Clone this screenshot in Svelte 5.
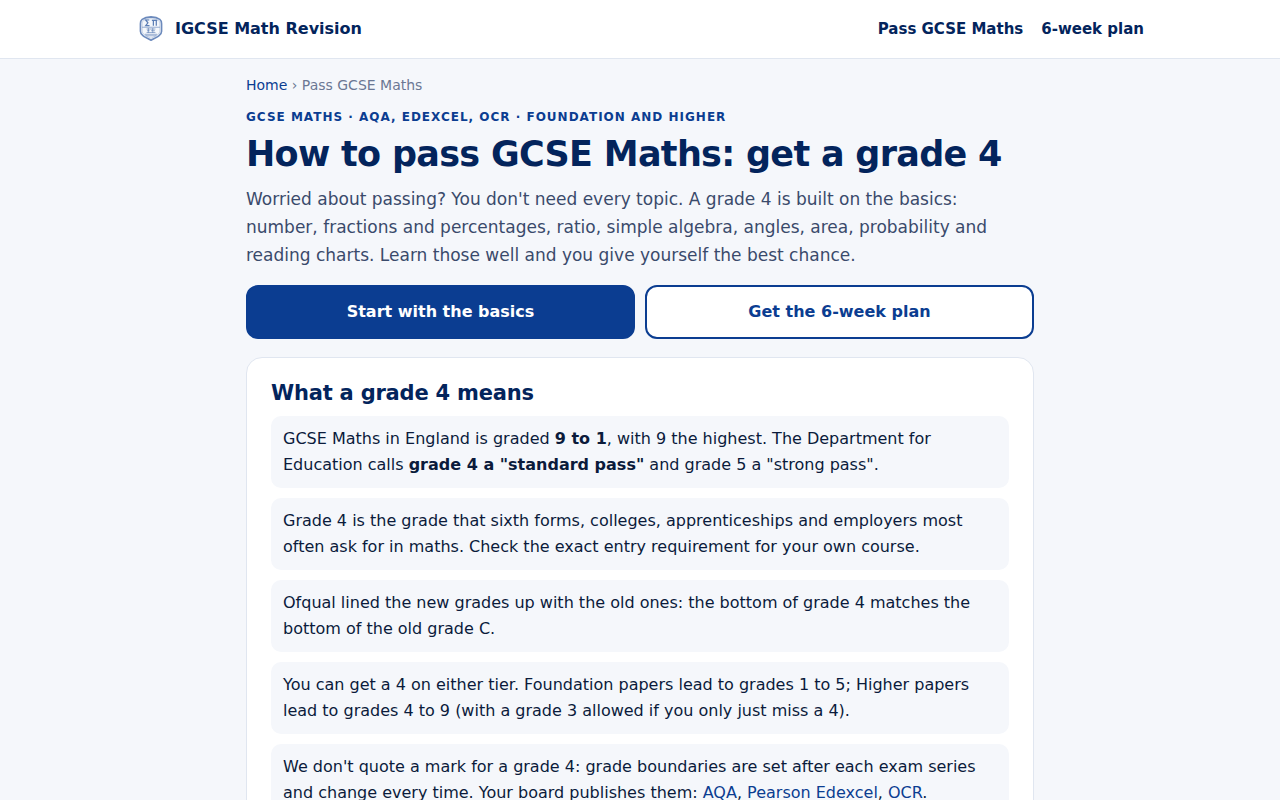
<script lang="ts">
const navLinks = [
    { label: 'Pass GCSE Maths', href: '#pass' },
    { label: '6-week plan', href: '#plan' }
]

const boards = [
    { name: 'AQA', href: '#aqa' },
    { name: 'Pearson Edexcel', href: '#edexcel' },
    { name: 'OCR', href: '#ocr' }
]
</script>

<header class="site-header">
    <div class="header-inner">
        <a class="brand" href="#home">
            <svg class="crest" viewBox="-2 -1 34 34" aria-hidden="true">
                <path class="shield" d="M15 2.3c4 .2 7.500 1 10 2.700 1.600 1.200 2 3 2 5v8.500c0 4-3.500 6.300-12 10.200C6.500 24.800 3 22.500 3 18.500V10c0-2 .4-3.800 2-5 2.500-1.700 6-2.500 10-2.700z" />
                <path class="inner" d="M15 4.300c3.600.1 6.500.8 8.500 2.200 1.200.9 1.500 2 1.500 3.700v8c0 3-2.600 5-10 8.300C7.600 23.200 5 21.200 5 18.200v-8c0-1.700.3-2.800 1.500-3.700 2-1.400 4.900-2.100 8.500-2.200z" />
                <path class="mark" d="M13 5.800H9l2.500 3.200L9 12.300h4.300M16 6.300h6M17.700 6.300v6M21 6.300v6" />
                <path class="fine" d="M5 14h20M10 16h10M10.500 18h3M15 18h4.500M10 20h10M8 22h14M9 23.700h12M12 15v5M17 15v5" />
            </svg>
            <span>IGCSE Math Revision</span>
        </a>
        <nav class="nav" aria-label="Main">
            {#each navLinks as link}
            <a href={link.href}>{link.label}</a>
            {/each}
        </nav>
    </div>
</header>

<main class="page">
    <nav class="crumbs" aria-label="Breadcrumb">
        <a href="#home">Home</a> › Pass GCSE Maths
    </nav>
    <p class="eyebrow">GCSE Maths · AQA, Edexcel, OCR · Foundation and Higher</p>
    <h1>How to pass GCSE Maths: get a grade 4</h1>
    <p class="lead">
        Worried about passing? You don't need every topic. A grade 4 is built on the basics:
        number, fractions and percentages, ratio, simple algebra, angles, area, probability and
        reading charts. Learn those well and you give yourself the best chance.
    </p>

    <div class="actions">
        <a class="button primary" href="#basics">Start with the basics</a>
        <a class="button" href="#plan">Get the 6-week plan</a>
    </div>

    <section class="card">
        <h2>What a grade 4 means</h2>
        <ul class="facts">
            <li>
                GCSE Maths in England is graded <strong>9 to 1</strong>, with 9 the highest. The Department for
                Education calls <strong>grade 4 a "standard pass"</strong> and grade 5 a "strong pass".
            </li>
            <li>
                Grade 4 is the grade that sixth forms, colleges, apprenticeships and employers most
                often ask for in maths. Check the exact entry requirement for your own course.
            </li>
            <li>
                Ofqual lined the new grades up with the old ones: the bottom of grade 4 matches the
                bottom of the old grade C.
            </li>
            <li>
                You can get a 4 on either tier. Foundation papers lead to grades 1 to 5; Higher papers
                lead to grades 4 to 9 (with a grade 3 allowed if you only just miss a 4).
            </li>
            <li>
                We don't quote a mark for a grade 4: grade boundaries are set after each exam series
                and change every time. Your board publishes them:
                {#each boards as board, i}<a href={board.href}>{board.name}</a>{i < boards.length - 1 ? ', ' : '.'}{/each}
            </li>
        </ul>
    </section>
</main>

<style>
:global(body) {
    margin: 0;
    background: #f5f7fb;
    color: #0b1b3b;
    font-family: "DejaVu Sans", Verdana, sans-serif;
    font-size: 16px;
    line-height: 26px;
}

a {
    color: #0b3d91;
    text-decoration: none;
}

.site-header {
    background: #fff;
    border-bottom: 1px solid #e0e6f0;
}

.header-inner {
    display: flex;
    align-items: center;
    justify-content: space-between;
    box-sizing: border-box;
    max-width: 1040px;
    margin: 0 auto;
    padding: 14px 16px;
}

.brand {
    display: flex;
    align-items: center;
    gap: 9px;
    color: #03245c;
    font-weight: bold;
    line-height: 30px;
}

.crest {
    width: 30px;
    height: 30px;
    fill: none;
    stroke: #0b3d91;
}

.shield {
    fill: #eef3fa;
    stroke-width: 1.8;
    opacity: 0.6;
}

.inner {
    stroke-width: 0.6;
    opacity: 0.35;
}

.mark {
    stroke-width: 1.4;
    opacity: 0.65;
}

.fine {
    stroke-width: 1;
    opacity: 0.45;
}

.nav {
    display: flex;
    gap: 18px;
    font-size: 15px;
    font-weight: bold;
}

.nav a {
    color: #03245c;
}

.page {
    box-sizing: border-box;
    max-width: 820px;
    margin: 0 auto;
    padding: 16px 16px 48px;
}

.crumbs {
    color: #6b7794;
    font-size: 14px;
    line-height: 20px;
}

.eyebrow {
    margin: 12px 0 6px;
    color: #0b3d91;
    font-size: 12px;
    font-weight: bold;
    letter-spacing: 1px;
    line-height: 20px;
    text-transform: uppercase;
}

h1 {
    margin: 0 0 10px;
    color: #03245c;
    font-size: 35px;
    letter-spacing: -0.02em;
    line-height: 42px;
}

.lead {
    margin: 0 0 16px;
    color: #3a4a6b;
    font-size: 17px;
    line-height: 28px;
}

.actions {
    display: grid;
    grid-template-columns: 1fr 1fr;
    gap: 10px;
    margin-bottom: 18px;
}

.button {
    padding: 12px 16px;
    background: #fff;
    border: 2px solid #0b3d91;
    border-radius: 12px;
    font-weight: bold;
    text-align: center;
}

.button.primary {
    background: #0b3d91;
    color: #fff;
}

.card {
    padding: 20px 24px;
    background: #fff;
    border: 1px solid #e0e6f0;
    border-radius: 16px;
}

h2 {
    margin: 0 0 8px;
    color: #03245c;
    font-size: 21px;
    letter-spacing: -0.01em;
    line-height: 30px;
}

.facts {
    display: grid;
    gap: 10px;
    margin: 0;
    padding: 0;
    list-style: none;
}

.facts li {
    padding: 10px 12px;
    background: #f5f7fb;
    border-radius: 10px;
}

@media (max-width: 600px) {
    .actions {
        grid-template-columns: 1fr;
    }
}
</style>
